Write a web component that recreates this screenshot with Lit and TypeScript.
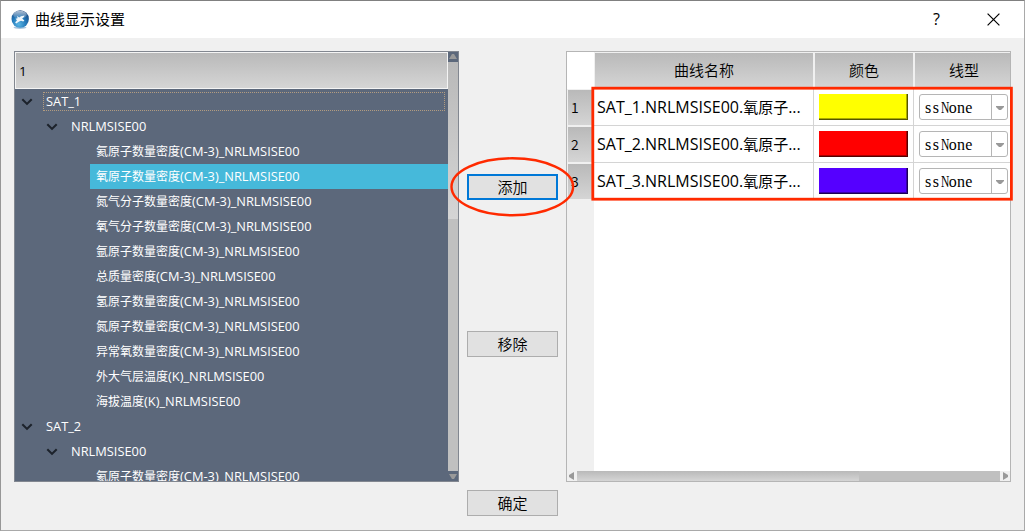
import { LitElement, html, svg, css } from "lit";
import { customElement } from "lit/decorators.js";

type Row = { level: number; text: string; selected?: boolean; focused?: boolean };

const rows: Row[] = [
  { level: 0, text: "SAT_1", focused: true },
  { level: 1, text: "NRLMSISE00" },
  { level: 2, text: "氦原子数量密度(CM-3)_NRLMSISE00" },
  { level: 2, text: "氧原子数量密度(CM-3)_NRLMSISE00", selected: true },
  { level: 2, text: "氮气分子数量密度(CM-3)_NRLMSISE00" },
  { level: 2, text: "氧气分子数量密度(CM-3)_NRLMSISE00" },
  { level: 2, text: "氩原子数量密度(CM-3)_NRLMSISE00" },
  { level: 2, text: "总质量密度(CM-3)_NRLMSISE00" },
  { level: 2, text: "氢原子数量密度(CM-3)_NRLMSISE00" },
  { level: 2, text: "氮原子数量密度(CM-3)_NRLMSISE00" },
  { level: 2, text: "异常氧数量密度(CM-3)_NRLMSISE00" },
  { level: 2, text: "外大气层温度(K)_NRLMSISE00" },
  { level: 2, text: "海拔温度(K)_NRLMSISE00" },
  { level: 0, text: "SAT_2" },
  { level: 1, text: "NRLMSISE00" },
  { level: 2, text: "氦原子数量密度(CM-3)_NRLMSISE00" },
];

const curves = [
  { name: "SAT_1.NRLMSISE00.氧原子...", color: "yellow" },
  { name: "SAT_2.NRLMSISE00.氧原子...", color: "red" },
  { name: "SAT_3.NRLMSISE00.氧原子...", color: "violet" },
];

/** Sets Chinese runs and Latin runs in their own sizes. */
const mixed = (text: string) =>
  text
    .split(/([\u4e00-\u9fff]+)/)
    .filter(Boolean)
    .map((part) =>
      /[\u4e00-\u9fff]/.test(part)
        ? html`<span class="cjk">${part}</span>`
        : html`<span>${part}</span>`
    );

const arrow = (points: string) =>
  html`<svg width="10" height="10" viewBox="0 0 10 10">${svg`<polygon points=${points} fill="#999"/>`}</svg>`;

@customElement("tree-panel")
class TreePanel extends LitElement {
  static styles = css`
    :host {
      display: flex;
      box-sizing: border-box;
      width: 445px;
      height: 431px;
      border: 1px solid #828790;
      background: #5c687b;
      overflow: hidden;
      font-family: "Open Sans", "Noto Sans CJK SC", sans-serif;
    }
    .main { flex: 1; min-width: 0; overflow: hidden; }
    .head {
      box-sizing: border-box;
      height: 37px;
      border: 1px solid #f4f4f4;
      background: linear-gradient(#b9b9b9, #d5d5d5);
      padding-left: 3px;
      font-size: 13.5px;
      line-height: 36px;
      color: #000;
    }
    .row { display: flex; height: 25px; align-items: center; color: #fff; }
    .arrow { box-sizing: border-box; width: 25px; display: flex; justify-content: center; padding-right: 2px; }
    .l1 .arrow { margin-left: 25px; }
    .l2 .arrow { margin-left: 50px; }
    .label {
      box-sizing: border-box;
      flex: 1;
      height: 25px;
      padding-left: 6px;
      line-height: 24px;
      font-size: 12.83px;
      white-space: nowrap;
    }
    .cjk { font-size: 12px; }
    .selected .label { background: #46b9da; }
    .focused .label {
      height: 19px;
      line-height: 17px;
      margin: 0 3px;
      padding-left: 2px;
      border: 1px dotted #b39c80;
    }
    .bar { width: 10px; display: flex; flex-direction: column; background: #c0c0c0; }
    .btn { height: 10px; background: #5c687b; }
    .btn svg, .arrow svg { display: block; }
    .thumb { height: 157px; background: linear-gradient(#b9b9b9, #d5d5d5); }
    .space { flex: 1; }
  `;
  render() {
    return html`
      <div class="main">
        <div class="head">1</div>
        ${rows.map(
          (r) => html`<div class="row l${r.level} ${r.selected ? "selected" : ""} ${r.focused ? "focused" : ""}">
            <div class="arrow">
              ${r.level < 2
                ? html`<svg width="12" height="8" viewBox="0 0 12 8"><path d="M1.3 1.3 6 5.9 10.7 1.3" fill="none" stroke="#1c222b" stroke-width="2.1" /></svg>`
                : ""}
            </div>
            <div class="label">${mixed(r.text)}</div>
          </div>`
        )}
      </div>
      <div class="bar">
        <div class="btn">${arrow("1,7 9,7 6,2 4,2")}</div>
        <div class="thumb"></div>
        <div class="space"></div>
        <div class="btn">${arrow("1,3 9,3 6,8 4,8")}</div>
      </div>
    `;
  }
}

@customElement("curve-table")
class CurveTable extends LitElement {
  static styles = css`
    :host {
      display: flex;
      flex-direction: column;
      box-sizing: border-box;
      width: 445px;
      height: 431px;
      border: 1px solid #b5b5b5;
      background: #fff;
      overflow: hidden;
      font-family: "Open Sans", "Noto Sans CJK SC", sans-serif;
      color: #000;
    }
    .body { flex: 1; display: flex; }
    .numbers { width: 27px; background: #f0f0f0; }
    .corner { height: 37px; background: #fff; }
    .num {
      box-sizing: border-box;
      height: 37px;
      border: 1px solid #f0f0f0;
      border-right-width: 2px;
      background: linear-gradient(#b9b9b9, #d5d5d5) padding-box;
      padding-left: 3px;
      font: 350 14px/35px "Noto Sans CJK SC", sans-serif;
    }
    .grid { display: grid; grid-template-columns: 220px 100px 96px; grid-auto-rows: 37px; align-content: start; }
    .th {
      box-sizing: border-box;
      border: 1px solid #f0f0f0;
      background: linear-gradient(#b9b9b9, #d5d5d5) padding-box;
      text-align: center;
      font: 350 15px/34px "Noto Sans CJK SC", sans-serif;
    }
    .th:nth-child(3) { border-right: 0; padding-left: 3px; }
    .td { box-sizing: border-box; border: 0 solid #d4d4d4; border-width: 0 1px 1px 0; padding: 5px 5px 5px; }
    .last { border-right: 0; padding-right: 2px; }
    .name { padding: 0 0 0 3px; font-size: 16px; line-height: 37px; white-space: nowrap; overflow: hidden; }
    .cjk { font-size: 15px; }
    .swatch { box-sizing: border-box; width: 89px; height: 26px; border: 0 solid; border-width: 0 1px 1px 0; }
    .yellow { background: #ff0; border-color: #555500; box-shadow: inset -1px -1px #aaaa00; }
    .red { background: #f00; border-color: #550000; box-shadow: inset -1px -1px #aa0000; }
    .violet { background: #50f; border-color: #1c0055; box-shadow: inset -1px -1px #3900aa; }
    .combo {
      box-sizing: border-box;
      width: 89px;
      height: 26px;
      border: 1px solid #b5b5b5;
      border-radius: 3px;
      display: flex;
      font: 16px/26px "Liberation Serif", serif;
    }
    .value { flex: 1; padding-left: 5px; }
    .narrow { letter-spacing: 1.6px; }
    .cap { display: inline-block; width: 8px; transform: scaleX(0.72); transform-origin: 0 50%; }
    .wide { letter-spacing: 0.2px; padding-left: 0.2px; }
    .drop { width: 15px; border-left: 1px solid #b5b5b5; display: flex; align-items: center; justify-content: center; }
    .drop svg { margin-top: 2px; }
    .scroll { height: 10px; display: flex; background: #c0c0c0; }
    .scroll svg { display: block; background: #f0f0f0; }
    .thumb { width: 282px; background: linear-gradient(#b9b9b9, #d5d5d5); }
    .space { flex: 1; }
  `;
  render() {
    return html`
      <div class="body">
        <div class="numbers">
          <div class="corner"></div>
          ${curves.map((_, i) => html`<div class="num">${i + 1}</div>`)}
        </div>
        <div class="grid">
          <div class="th">曲线名称</div>
          <div class="th">颜色</div>
          <div class="th">线型</div>
          ${curves.map(
            (c) => html`
              <div class="td name">${mixed(c.name)}</div>
              <div class="td"><div class="swatch ${c.color}"></div></div>
              <div class="td last">
                <div class="combo">
                  <span class="value"><span class="narrow">ss</span><span class="cap">N</span><span class="wide">one</span></span>
                  <span class="drop"><svg width="8" height="4" viewBox="0 0 8 4"><path d="M0 0H8V1L5 4H3L0 1Z" fill="#999" /></svg></span>
                </div>
              </div>
            `
          )}
        </div>
      </div>
      <div class="scroll">
        ${arrow("7,1 7,9 2,6 2,4")}
        <div class="thumb"></div>
        <div class="space"></div>
        ${arrow("3,1 3,9 8,6 8,4")}
      </div>
    `;
  }
}

@customElement("app-root")
class AppRoot extends LitElement {
  static styles = css`
    :host {
      display: flex;
      flex-direction: column;
      position: relative;
      box-sizing: border-box;
      width: 1025px;
      height: 531px;
      border: 1px solid #a9a9a9;
      border-top-color: #808080;
      border-left-color: #979797;
      background: #f0f0f0;
      overflow: hidden;
      font-family: "Noto Sans CJK SC", sans-serif;
      color: #000;
    }
    .title { height: 37px; display: flex; align-items: center; background: #fff; padding-left: 9px; }
    .logo { width: 20px; height: 20px; }
    .caption { flex: 1; padding-left: 5px; font-size: 15px; line-height: 35px; padding-bottom: 2px; }
    .help { width: 57px; text-align: center; font: 16px/36px "Open Sans", sans-serif; padding-bottom: 2px; }
    .close { width: 56px; display: flex; justify-content: center; margin-right: 3px; padding-bottom: 1px; }
    .content { display: flex; padding: 13px 13px 0; }
    .actions { width: 107px; display: flex; flex-direction: column; align-items: center; padding-top: 123px; }
    .button {
      box-sizing: border-box;
      width: 91px;
      height: 26px;
      border: 1px solid #adadad;
      background: #e1e1e1;
      padding: 0 0 1px;
      text-align: center;
      font: 350 15px/23px "Noto Sans CJK SC", sans-serif;
      color: #000;
    }
    .primary { border: 2px solid #0078d7; line-height: 21px; }
    .remove { margin-top: 131px; }
    .ok { margin-top: 133px; }
    .marks { position: absolute; left: -1px; top: -1px; pointer-events: none; }
  `;
  render() {
    return html`
      <div class="title">
        <svg class="logo" viewBox="0 0 20 20">
          <defs>
            <radialGradient id="globe" cx=".42" cy=".8" r=".85">
              <stop offset="0" stop-color="#58b4e4" />
              <stop offset=".5" stop-color="#2277b8" />
              <stop offset="1" stop-color="#173f78" />
            </radialGradient>
            <linearGradient id="shine" x2="0" y2="1">
              <stop offset="0" stop-color="#fff" stop-opacity=".65" />
              <stop offset="1" stop-color="#fff" stop-opacity=".05" />
            </linearGradient>
          </defs>
          <ellipse cx="10" cy="17.5" rx="6.5" ry="1.5" fill="#a9c5df" />
          <circle cx="10.2" cy="9" r="8.7" fill="url(#globe)" />
          <ellipse cx="10" cy="4.8" rx="6.8" ry="4" fill="url(#shine)" />
          <path d="M7 6 9.2 7.6 11 6.2 14.6 5.4 14 7 12.2 8.6 14.4 10.6 13.2 11.6 11 10.8 9.2 11.4 6.2 13.4 5.2 12.6 7 10.2 5.4 8.8 7.6 8.2Z" fill="#f0f7fc" />
        </svg>
        <div class="caption">曲线显示设置</div>
        <div class="help">?</div>
        <div class="close">
          <svg width="13" height="13" viewBox="0 0 13 13"><path d="M.6.6 12.4 12.4M12.4.6.6 12.4" stroke="#000" stroke-width="1.2" /></svg>
        </div>
      </div>
      <div class="content">
        <tree-panel></tree-panel>
        <div class="actions">
          <button class="button primary">添加</button>
          <button class="button remove">移除</button>
          <button class="button ok">确定</button>
        </div>
        <curve-table></curve-table>
      </div>
      <svg class="marks" width="1025" height="531" viewBox="0 0 1025 531" fill="none" stroke="#ff2a00">
        <ellipse cx="512.3" cy="186.8" rx="60.8" ry="28.5" stroke-width="2.4" />
        <rect x="592.8" y="88.2" width="418.6" height="111" stroke-width="2.8" />
      </svg>
    `;
  }
}
